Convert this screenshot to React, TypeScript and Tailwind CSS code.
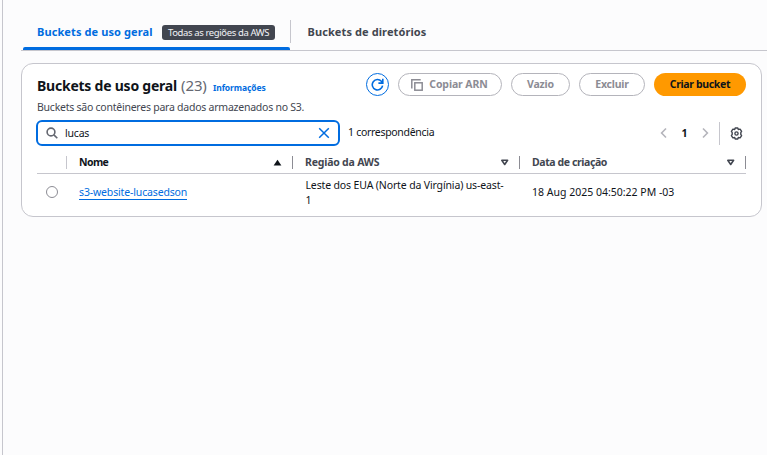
import React from 'react';

const SortIcon = ({ filled = false }: { filled?: boolean }) => (
  <svg className="block" width="9" height="7" viewBox="0 0 9 7">
    {filled ? (
      <path d="M4.5 0.7 8.4 6.4H0.6z" fill="#0f141a" />
    ) : (
      <path d="M1.8 1.3h5.8L4.7 5.5z" fill="none" stroke="#424650" strokeWidth="1.6" strokeLinejoin="round" />
    )}
  </svg>
);

const Chevron = ({ right = false }: { right?: boolean }) => (
  <svg className="block shrink-0" width="7" height="12" viewBox="0 0 7 12" fill="none" stroke="#b4b4bb" strokeWidth="1.6">
    <path d={right ? 'M1 1.5 5.4 6 1 10.5' : 'M6 1.5 1.6 6 6 10.5'} />
  </svg>
);

const pill = 'h-[23px] shrink-0 rounded-full border border-[#b4b4bb] flex items-center justify-center text-[10.5px] font-bold text-[#8c8c94]';

export default function App() {
  return (
    <div className="flex h-[455px] w-[767px] overflow-hidden bg-[#fcfcfd] pl-[2px] font-['Noto_Sans','Open_Sans',sans-serif] text-[10.5px] leading-[15px] whitespace-nowrap text-[#0f141a]">
      <div className="w-px shrink-0 bg-[#c6c6cd]" />
      <div className="w-[764px] shrink-0 pl-[18px] pt-[20px]">
        <nav className="flex h-[31px] border-b border-[#c6c6cd] text-[11px] font-bold">
          <div className="ml-[2px] flex w-[267px] shrink-0 flex-col justify-between">
            <div className="flex h-[24px] items-center pl-[14px]">
              <span className="w-[125px] pb-[2px] tracking-[0.1px] text-[#006ce0]">Buckets de uso geral</span>
              <span className="mt-px flex h-[15px] w-[113px] items-center justify-center rounded-[3px] bg-[#424650] text-[9.5px] font-normal tracking-[-0.38px] text-[#f3f3f7]">Todas as regiões da AWS</span>
            </div>
            <div className="h-[3px] rounded-t-[2px] bg-[#006ce0]" />
          </div>
          <div className="h-[23px] w-px shrink-0 bg-[#c6c6cd]" />
          <div className="flex h-[24px] items-center pb-[2px] pl-[16.5px] tracking-[0.1px] text-[#424650]">Buckets de diretórios</div>
        </nav>

        <section className="mt-[12px] h-[154px] w-[741px] rounded-[12px] border border-[#c6c6cd] bg-white px-[15px] pt-[9px]">
          <div className="flex h-[23px] items-center">
            <h2 className="flex w-[329px] shrink-0 items-baseline pt-[3px] text-[14px] leading-[20px]">
              <span className="w-[144px] font-bold tracking-[-0.23px]">Buckets de uso geral</span>
              <span className="w-[32px] text-[15px] tracking-[-0.1px] text-[#656871]">(23)</span>
              <span className="text-[8.5px] font-bold tracking-[-0.1px] text-[#006ce0]">Informações</span>
            </h2>
            <button className="flex h-[23px] w-[23px] shrink-0 items-center justify-center rounded-full border border-[#006ce0]">
              <svg className="block" width="13" height="13" viewBox="0 0 13 13" fill="none" stroke="#006ce0" strokeWidth="1.6">
                <path d="M11.6 7.6A5.2 5.2 0 1 1 10.4 3.3L11.6 4.8M11.8 0.7v4.4H7.4" />
              </svg>
            </button>
            <div className={`${pill} ml-[9px] w-[104px] gap-[6px]`}>
              <svg className="-ml-px block" width="12" height="12" viewBox="0 0 12 12" fill="none" stroke="#8c8c94" strokeWidth="1.5">
                <path d="M0.8 9.5V0.8h8.9" />
                <rect x="3.8" y="3.8" width="7.4" height="7.4" />
              </svg>
              <span className="tracking-[-0.1px]">Copiar ARN</span>
            </div>
            <div className={`${pill} ml-[9px] w-[59px] tracking-[-0.15px]`}>Vazio</div>
            <div className={`${pill} ml-[9px] w-[66px] tracking-[-0.2px]`}>Excluir</div>
            <div className="ml-[9px] flex h-[23px] w-[92px] shrink-0 items-center justify-center rounded-full bg-[#ff9900] text-[10.5px] font-bold tracking-[-0.35px]">Criar bucket</div>
          </div>
          <p className="mt-[4px] h-[15px] tracking-[-0.24px] text-[#424650]">Buckets são contêineres para dados armazenados no S3.</p>
          <div className="mt-[5px] flex h-[26px] items-center">
            <div className="-ml-px flex h-[26px] w-[304px] shrink-0 items-center rounded-[6px] border-2 border-[#006ce0] pl-[8px] pr-[8px]">
              <svg className="block" width="12" height="12" viewBox="0 0 12 12" fill="none" stroke="#656871" strokeWidth="1.6">
                <circle cx="5" cy="5" r="3.9" />
                <path d="m7.9 7.9 3.4 3.4" />
              </svg>
              <span className="ml-[7px] grow tracking-[-0.2px]">lucas</span>
              <svg className="block" width="12" height="12" viewBox="0 0 12 12" stroke="#006ce0" strokeWidth="1.5">
                <path d="m1.2 1.2 9.6 9.6M10.8 1.2 1.2 10.8" />
              </svg>
            </div>
            <span className="ml-[8px] grow pb-[2px] tracking-[-0.3px]">1 correspondência</span>
            <Chevron />
            <span className="w-[35px] text-center font-bold">1</span>
            <Chevron right />
            <div className="ml-[10px] mr-[10px] h-[23px] w-px bg-[#c6c6cd]" />
            <svg className="mr-[3px] block shrink-0" width="13" height="13" viewBox="0 0 13 13" fill="none" stroke="#424650" strokeWidth="1.4" strokeLinejoin="round">
              <path d="M5.2 1h2.6l.5 1.5 1.8-.4 1.5 2.3-.8 1.2v1.8l.8 1.2-1.5 2.3-1.8-.4-.5 1.5H5.2l-.5-1.5-1.8.4-1.5-2.3.8-1.2V5.6l-.8-1.2 1.5-2.3 1.8.4z" />
              <circle cx="6.5" cy="6.5" r="1.6" />
            </svg>
          </div>
          <div className="flex h-[28px] w-[709px] items-center border-b border-[#c6c6cd] pt-[5px] font-bold text-[#424650]">
            <div className="h-[13px] w-[30px] shrink-0 border-r border-[#c6c6cd]" />
            <div className="flex h-[13px] w-[226px] shrink-0 items-center justify-between border-r border-[#8c8c94] pl-[12px] pr-[10px] text-[#0f141a]">
              <span className="tracking-[-0.6px]">Nome</span><SortIcon filled />
            </div>
            <div className="flex h-[13px] w-[227px] shrink-0 items-center justify-between border-r border-[#8c8c94] pl-[12px] pr-[10px]">
              <span className="tracking-[-0.2px]">Região da AWS</span><SortIcon />
            </div>
            <div className="flex h-[13px] w-[226px] shrink-0 items-center justify-between border-r border-[#8c8c94] pl-[12px] pr-[10px]">
              <span className="tracking-[-0.4px]">Data de criação</span><SortIcon />
            </div>
          </div>
          <div className="flex h-[37px] w-[709px] items-center">
            <div className="mb-px ml-[9px] h-[12px] w-[12px] shrink-0 rounded-full border border-[#8c8c94]" />
            <div className="ml-[21px] w-[226.5px] shrink-0">
              <a className="inline-block h-[15px] border-b border-[#006ce0] leading-[14px] tracking-[-0.15px] text-[#006ce0]">s3-website-lucasedson</a>
            </div>
            <div className="w-[226.5px] shrink-0 tracking-[-0.14px]">Leste dos EUA (Norte da Virgínia) us-east-<br />1</div>
            <div>18 Aug 2025 04:50:22 PM -03</div>
          </div>
        </section>
      </div>
    </div>
  );
}
